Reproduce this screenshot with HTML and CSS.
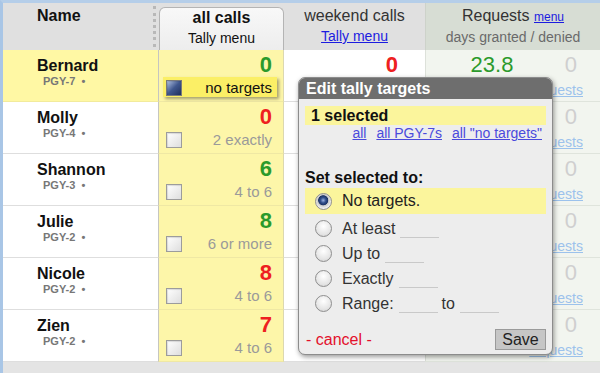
FILE: index.html
```html
<!DOCTYPE html>
<html lang="en">

<head>
    <meta charset="UTF-8">
    <title>Tally targets</title>
    <link rel="stylesheet" href="styles.css">
</head>

<body>
    <div class="page">
        <div class="grid header">
            <div class="name-head">Name</div>
            <div class="tab-head">
                <div class="tab">
                    <div class="head-title">all calls</div>
                    <div class="head-sub">Tally menu</div>
                </div>
            </div>
            <div class="plain-head">
                <div class="head-light">weekend calls</div>
                <div class="head-sub"><a href="#">Tally menu</a></div>
            </div>
            <div class="req-head">
                <div class="head-light">Requests <a href="#" class="small-link">menu</a></div>
                <div class="head-sub gray">days granted / denied</div>
            </div>
        </div>

        <div class="grid row selected">
            <div class="cell name">
                <div class="who">Bernard</div>
                <div class="pgy">PGY-7 <span class="dot">•</span></div>
            </div>
            <div class="cell tally">
                <div class="num green">0</div>
                <div class="target active"><span class="check on"></span><span>no targets</span></div>
            </div>
            <div class="cell weekend"><div class="num red">0</div></div>
            <div class="cell req">
                <span class="granted">23.8</span>
                <span class="denied">0</span>
                <a href="#" class="req-link">requests</a>
            </div>
        </div>

        <div class="grid row">
            <div class="cell name">
                <div class="who">Molly</div>
                <div class="pgy">PGY-4 <span class="dot">•</span></div>
            </div>
            <div class="cell tally">
                <div class="num red">0</div>
                <div class="target"><span class="check"></span><span>2 exactly</span></div>
            </div>
            <div class="cell weekend"></div>
            <div class="cell req">
                <span class="granted"></span>
                <span class="denied">0</span>
                <a href="#" class="req-link">requests</a>
            </div>
        </div>

        <div class="grid row">
            <div class="cell name">
                <div class="who">Shannon</div>
                <div class="pgy">PGY-3 <span class="dot">•</span></div>
            </div>
            <div class="cell tally">
                <div class="num green">6</div>
                <div class="target"><span class="check"></span><span>4 to 6</span></div>
            </div>
            <div class="cell weekend"></div>
            <div class="cell req">
                <span class="granted"></span>
                <span class="denied">0</span>
                <a href="#" class="req-link">requests</a>
            </div>
        </div>

        <div class="grid row">
            <div class="cell name">
                <div class="who">Julie</div>
                <div class="pgy">PGY-2 <span class="dot">•</span></div>
            </div>
            <div class="cell tally">
                <div class="num green">8</div>
                <div class="target"><span class="check"></span><span>6 or more</span></div>
            </div>
            <div class="cell weekend"></div>
            <div class="cell req">
                <span class="granted"></span>
                <span class="denied">0</span>
                <a href="#" class="req-link">requests</a>
            </div>
        </div>

        <div class="grid row">
            <div class="cell name">
                <div class="who">Nicole</div>
                <div class="pgy">PGY-2 <span class="dot">•</span></div>
            </div>
            <div class="cell tally">
                <div class="num red">8</div>
                <div class="target"><span class="check"></span><span>4 to 6</span></div>
            </div>
            <div class="cell weekend"></div>
            <div class="cell req">
                <span class="granted"></span>
                <span class="denied">0</span>
                <a href="#" class="req-link">requests</a>
            </div>
        </div>

        <div class="grid row">
            <div class="cell name">
                <div class="who">Zien</div>
                <div class="pgy">PGY-2 <span class="dot">•</span></div>
            </div>
            <div class="cell tally">
                <div class="num red">7</div>
                <div class="target"><span class="check"></span><span>4 to 6</span></div>
            </div>
            <div class="cell weekend"></div>
            <div class="cell req">
                <span class="granted"></span>
                <span class="denied">0</span>
                <a href="#" class="req-link">requests</a>
            </div>
        </div>

        <!-- popup editor -->
        <div class="popup">
            <div class="popup-title">Edit tally targets</div>
            <div class="popup-body">
                <div class="sel-bar">1 selected</div>
                <div class="sel-links">
                    <a href="#">all</a>
                    <a href="#">all PGY-7s</a>
                    <a href="#">all "no targets"</a>
                </div>
                <div class="set-label">Set selected to:</div>
                <div class="opt on"><span class="radio on"></span>No targets.</div>
                <div class="opt first"><span class="radio"></span>At least<span class="blank"></span></div>
                <div class="opt"><span class="radio"></span>Up to<span class="blank"></span></div>
                <div class="opt"><span class="radio"></span>Exactly<span class="blank"></span></div>
                <div class="opt"><span class="radio"></span>Range:<span class="blank"></span><span class="to">to</span><span class="blank"></span></div>
            </div>
            <div class="popup-foot">
                <a href="#" class="cancel">- cancel -</a>
                <span class="save">Save</span>
            </div>
        </div>
    </div>
</body>

</html>
```

FILE: styles.css
```css
body {
    margin: 0;
    font-family: "Liberation Sans", Arial, sans-serif;
    color: #111;
    background: #fff;
}

.page {
    position: relative;
    width: 597px;
    height: 370px;
    border-top: 3px solid #b5cee9;
    border-left: 3px solid #a9c6e6;
    background: #e4e4e4;
    overflow: hidden;
}

.grid {
    display: grid;
    grid-template-columns: 155px 126px 141px 175px;
}

/* header */

.header {
    height: 47px;
    background: #e0e0e0;
}

.name-head {
    margin: 3px 2px 3px 0;
    padding: 1px 0 0 34px;
    border-right: 3px dotted #b8b8b8;
    font-size: 16px;
    font-weight: bold;
    line-height: 18px;
}

.tab-head {
    padding-top: 4px;
}

.tab {
    height: 100%;
    box-sizing: border-box;
    margin-left: 1px;
    padding-top: 1px;
    border: 1px solid #b4b4b4;
    border-bottom: none;
    border-radius: 6px 6px 0 0;
    background: linear-gradient(#f8f8f8, #ededed);
    text-align: center;
}

.head-title {
    font-size: 16px;
    font-weight: bold;
    line-height: 18px;
}

.head-sub {
    margin-top: 2px;
    font-size: 14px;
    line-height: 18px;
}

.head-sub a {
    color: #1c1ce0;
}

.head-sub.gray {
    color: #6a6a6a;
}

.plain-head,
.req-head {
    padding-top: 4px;
    text-align: center;
}

.req-head {
    background: #d7ddd4;
    border-left: 1px solid #cdd2ca;
}

.head-light {
    font-size: 16px;
    line-height: 18px;
    color: #333;
}

.small-link {
    font-size: 12px;
    color: #1c1ce0;
}

/* rows */

.row {
    height: 52px;
    background: #fff;
}

.cell {
    box-sizing: border-box;
    border-bottom: 1px solid #dedede;
}

.name {
    padding: 7px 0 0 34px;
}

.selected .name {
    background: #fff8a4;
    border-bottom-color: #f2eb9c;
}

.who {
    font-size: 16px;
    font-weight: bold;
    line-height: 18px;
}

.pgy {
    margin-left: 6px;
    font-size: 11px;
    font-weight: bold;
    line-height: 12px;
    color: #777;
}

.dot {
    margin-left: 3px;
}

.tally {
    padding: 3px 11px 0 7px;
    background: #fdf6a9;
    border-left: 1px solid #c6c6c0;
    border-right: 1px solid #dcd8b0;
    border-bottom-color: #efe8a4;
}

.num {
    font-size: 22px;
    font-weight: bold;
    line-height: 24px;
    text-align: right;
}

.green {
    color: #2b9a2b;
}

.red {
    color: #ee2020;
}

.target {
    display: flex;
    align-items: center;
    justify-content: space-between;
    margin-top: 2px;
    font-size: 15px;
    line-height: 18px;
    color: #9a9a9a;
}

.target.active {
    margin: 0 -5px 0 -3px;
    padding: 2px 5px 0 3px;
    background: #fbef66;
    box-shadow: 2px 2px 3px rgba(0, 0, 0, 0.35);
    color: #111;
}

.check {
    width: 16px;
    height: 16px;
    box-sizing: border-box;
    border: 1px solid #9c9c9c;
    background: linear-gradient(135deg, #ffffff, #dedede);
    box-shadow: inset 1px 1px 1px rgba(0, 0, 0, 0.12);
}

.check.on {
    border-color: #7a7a7a;
    background: linear-gradient(135deg, #b4c4e4, #40578e 50%, #1e2f5c);
}

.weekend {
    padding: 3px 27px 0 0;
}

.req {
    display: grid;
    grid-template-columns: 132px 1fr;
    padding: 3px 17px 0 0;
    background: #f2f5ef;
    border-left: 1px solid #dde1da;
    border-bottom-color: #dfe4dc;
}

.granted {
    font-size: 22px;
    line-height: 24px;
    color: #2b9a2b;
    text-align: center;
}

.denied {
    justify-self: end;
    margin-right: 6px;
    font-size: 22px;
    line-height: 24px;
    color: #cfcfcf;
}

.req-link {
    grid-column: 1 / 3;
    justify-self: end;
    margin-top: 2px;
    font-size: 14px;
    line-height: 18px;
    color: #9cc2ec;
}

/* popup */

.popup {
    position: absolute;
    left: 295px;
    top: 74px;
    width: 255px;
    height: 278px;
    box-sizing: border-box;
    display: flex;
    flex-direction: column;
    border: 1px solid #8c8c8c;
    border-radius: 7px;
    background: #ededed;
    box-shadow: 1px 2px 5px rgba(0, 0, 0, 0.4);
    overflow: hidden;
}

.popup-title {
    padding-left: 7px;
    background: #6e6e6e;
    color: #fff;
    font-size: 16px;
    font-weight: bold;
    line-height: 21px;
}

.popup-body {
    padding: 7px 6px 0 6px;
    color: #333;
}

.sel-bar {
    padding-left: 6px;
    background: #fbf59c;
    color: #111;
    font-size: 16px;
    font-weight: bold;
    line-height: 19px;
}

.sel-links {
    padding-right: 4px;
    text-align: right;
    font-size: 14px;
    line-height: 17px;
}

.sel-links a {
    margin-left: 6px;
    color: #4a4adc;
}

.set-label {
    margin-top: 26px;
    color: #111;
    font-size: 16px;
    font-weight: bold;
    line-height: 19px;
}

.opt {
    display: flex;
    align-items: center;
    height: 25px;
    padding-left: 10px;
    font-size: 16px;
}

.opt.on {
    height: 26px;
    margin-top: 1px;
    background: #fbf59c;
    color: #222;
}

.opt.first {
    margin-top: 2px;
}

.radio {
    width: 17px;
    height: 17px;
    box-sizing: border-box;
    margin-right: 10px;
    border: 1px solid #8e8e8e;
    border-radius: 50%;
    background: radial-gradient(circle at 50% 35%, #ffffff, #e4e4e4 65%, #cbcbcb);
}

.radio.on {
    background: radial-gradient(circle at 48% 42%, #9db2e0 0, #34528f 22%, #1c3366 40%, #c9c9c9 46%, #f2f2f2 70%, #bdbdbd 100%);
}

.blank {
    width: 39px;
    height: 1px;
    margin: 18px 0 0 5px;
    background: #c9c9c9;
}

.to {
    margin: 0 0 0 4px;
}

.popup-foot {
    display: flex;
    align-items: center;
    justify-content: space-between;
    margin-top: auto;
    padding: 0 6px 4px 7px;
}

.cancel {
    color: #e3102c;
    font-size: 16px;
    text-decoration: none;
}

.save {
    width: 51px;
    height: 21px;
    box-sizing: border-box;
    border: 1px solid #9a9a9a;
    background: #c6c6c6;
    color: #222;
    font-size: 16px;
    line-height: 19px;
    text-align: center;
}
```
